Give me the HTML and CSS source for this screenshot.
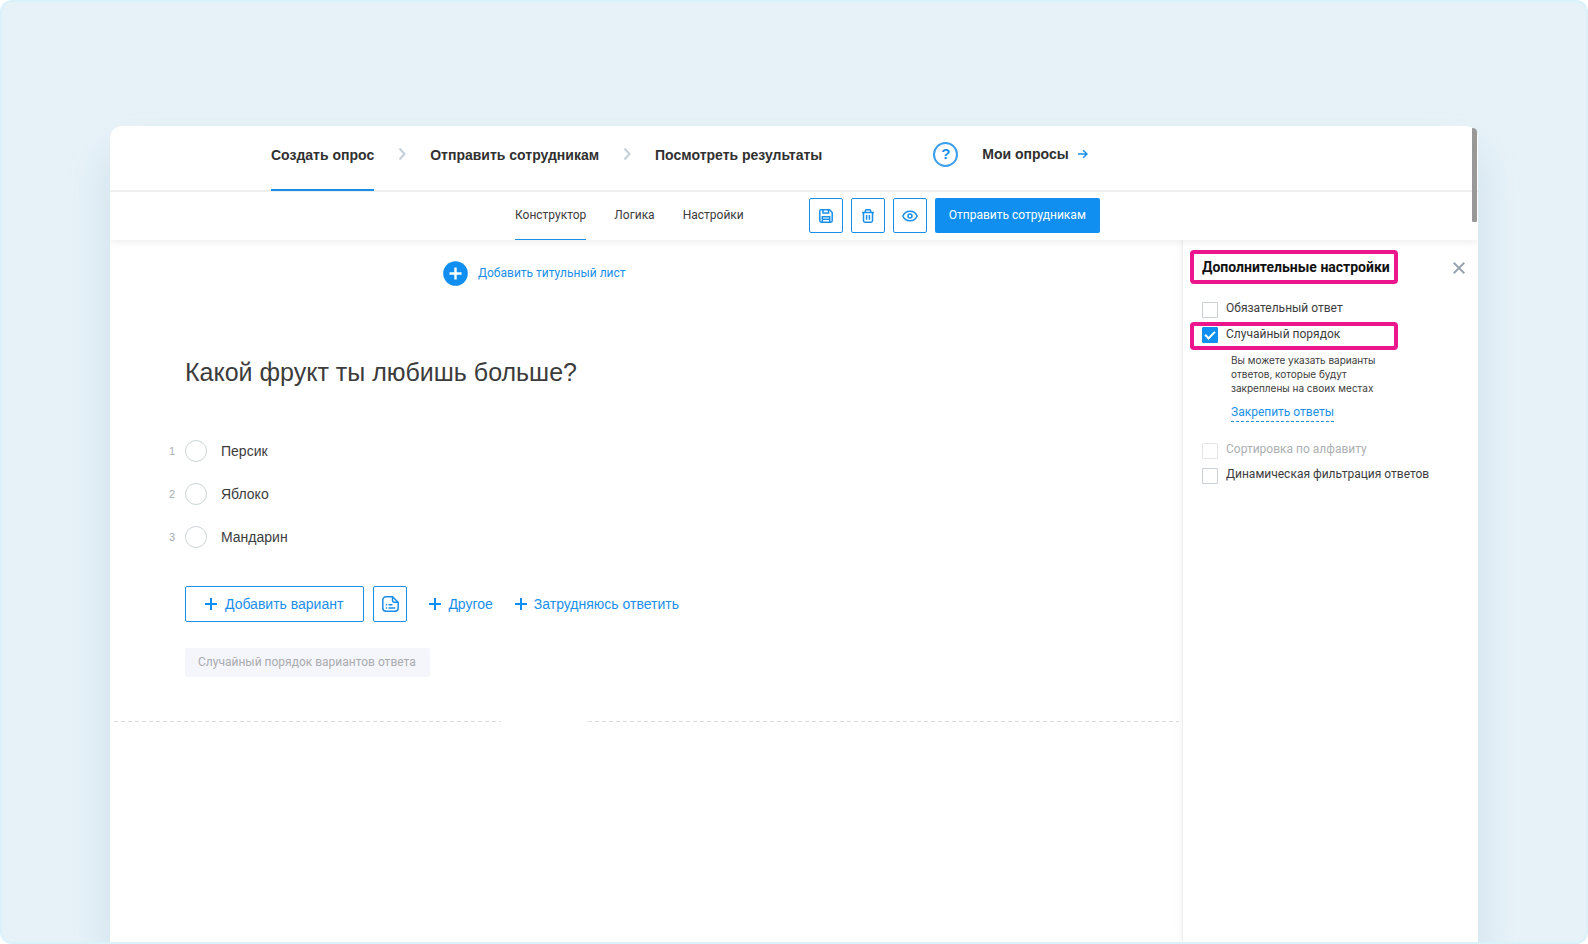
FILE: index.html
```html
<!DOCTYPE html>
<html lang="ru">
<head>
<meta charset="utf-8">
<meta name="viewport" content="width=device-width, initial-scale=1">
<title>Конструктор опроса</title>
<link rel="stylesheet" href="styles.css">
</head>
<body>
<div class="frame">
  <div class="card">
    <header class="header">
      <nav class="steps">
        <a class="step step-active" href="#">Создать опрос</a>
        <svg class="chevron" width="8" height="14" viewBox="0 0 8 14"><path d="M1.5 1.5 6.5 7l-5 5.5"/></svg>
        <a class="step" href="#">Отправить сотрудникам</a>
        <svg class="chevron" width="8" height="14" viewBox="0 0 8 14"><path d="M1.5 1.5 6.5 7l-5 5.5"/></svg>
        <a class="step" href="#">Посмотреть результаты</a>
      </nav>
      <button class="help" type="button" aria-label="Помощь">?</button>
      <a class="my-surveys" href="#">Мои опросы
        <svg class="line-icon" width="10" height="10" viewBox="0 0 10 10"><path d="M0 5h9M5.2 1.2 9 5 5.2 8.8"/></svg>
      </a>
    </header>

    <div class="toolbar">
      <nav class="tabs">
        <a class="tab tab-active" href="#">Конструктор</a>
        <a class="tab" href="#">Логика</a>
        <a class="tab" href="#">Настройки</a>
      </nav>
      <div class="actions">
        <button class="icon-button" type="button" aria-label="Сохранить">
          <svg class="line-icon" width="14" height="14" viewBox="0 0 14 14"><path d="M2.2.8h8.3l2.7 2.7v8.3a1.4 1.4 0 0 1-1.4 1.4H2.2A1.4 1.4 0 0 1 .8 11.8V2.2A1.4 1.4 0 0 1 2.2.8zM4 1v3h5.500V1M3.3 13V7.800h7.4V13M3.5 10.300h7"/></svg>
        </button>
        <button class="icon-button" type="button" aria-label="Удалить">
          <svg class="line-icon" width="14" height="14" viewBox="0 0 14 14"><path d="M1 3.500h12M4.3 3V2a1.300 1.300 0 0 1 1.300-1.300h2.800A1.300 1.300 0 0 1 9.700 2v1M2.500 3.500v8.300a1.400 1.400 0 0 0 1.400 1.400h6.200a1.400 1.400 0 0 0 1.400-1.400V3.500M5.600 6v4.700M8.400 6v4.700"/></svg>
        </button>
        <button class="icon-button" type="button" aria-label="Просмотр">
          <svg class="line-icon" width="16" height="12" viewBox="0 0 16 12"><path d="M.8 6C2.200 3 4.800 1.200 8 1.200S13.800 3 15.200 6C13.800 9 11.200 10.800 8 10.800S2.200 9 .8 6z"/><circle cx="8" cy="6" r="2"/></svg>
        </button>
        <button class="send" type="button">Отправить сотрудникам</button>
      </div>
    </div>

    <div class="workspace">
      <main class="editor">
        <button class="add-title" type="button">
          <svg width="25" height="25" viewBox="0 0 25 25"><circle cx="12.500" cy="12.500" r="12.300" fill="#108ff0"/><path d="M12.500 6.500v12M6.500 12.500h12" stroke="#fff" stroke-width="2.400"/></svg>
          <span class="add-title-text">Добавить титульный лист</span>
        </button>

        <section class="question">
          <h1 class="question-title">Какой фрукт ты любишь больше?</h1>
          <div class="answers">
            <div class="answer"><span class="number">1</span><input class="radio" type="radio" name="fruit" id="a1"><label for="a1">Персик</label></div>
            <div class="answer"><span class="number">2</span><input class="radio" type="radio" name="fruit" id="a2"><label for="a2">Яблоко</label></div>
            <div class="answer"><span class="number">3</span><input class="radio" type="radio" name="fruit" id="a3"><label for="a3">Мандарин</label></div>
          </div>
          <div class="add-row">
            <button class="add-option" type="button">
              <svg class="plus" width="12" height="12" viewBox="0 0 12 12"><path d="M6 0v12M0 6h12"/></svg>Добавить вариант
            </button>
            <button class="icon-button icon-button-tall" type="button" aria-label="Добавить списком">
              <svg class="line-icon" width="17" height="16" viewBox="0 0 17 16"><path d="M10.500.8H4A3.200 3.200 0 0 0 .8 4v8A3.200 3.200 0 0 0 4 15.200h9a3.200 3.200 0 0 0 3.200-3.200V6.200zM10.500 1v3.200a2 2 0 0 0 2 2H16M3.800 8.800h1.300M6.500 8.800h4M3.800 12h1.300M6.500 12h6.700"/></svg>
            </button>
            <button class="add-link" type="button"><svg class="plus" width="12" height="12" viewBox="0 0 12 12"><path d="M6 0v12M0 6h12"/></svg>Другое</button>
            <button class="add-link" type="button"><svg class="plus" width="12" height="12" viewBox="0 0 12 12"><path d="M6 0v12M0 6h12"/></svg>Затрудняюсь ответить</button>
          </div>
          <div class="badge">Случайный порядок вариантов ответа</div>
        </section>
        <div class="divider"><span class="dash dash-short"></span><span class="dash dash-long"></span></div>
      </main>

      <aside class="sidebar">
        <div class="sidebar-head">
          <h2 class="sidebar-title highlight">Дополнительные настройки</h2>
          <button class="close" type="button" aria-label="Закрыть">
            <svg width="12" height="12" viewBox="0 0 12 12"><path d="m.7.7 10.600 10.600M11.300.7.7 11.300"/></svg>
          </button>
        </div>
        <div class="setting"><input class="checkbox" type="checkbox" id="s1"><label for="s1">Обязательный ответ</label></div>
        <div class="setting setting-marked highlight"><input class="checkbox" type="checkbox" id="s2" checked><label for="s2">Случайный порядок</label></div>
        <p class="hint">Вы можете указать варианты<br>ответов, которые будут<br>закреплены на своих местах</p>
        <a class="pin-link" href="#">Закрепить ответы</a>
        <div class="setting setting-disabled"><input class="checkbox" type="checkbox" id="s3" disabled><label for="s3">Сортировка по алфавиту</label></div>
        <div class="setting"><input class="checkbox" type="checkbox" id="s4"><label for="s4">Динамическая фильтрация ответов</label></div>
      </aside>
    </div>
    <span class="scroll-thumb"></span>
  </div>
</div>
</body>
</html>
```
FILE: styles.css
```css
* { box-sizing: border-box; }

body {
  margin: 0;
  background: #fff;
  color: #3c3c3c;
  font: 14px/16px "Liberation Sans", Arial, sans-serif;
}

a { color: inherit; text-decoration: none; }

button {
  margin: 0;
  padding: 0;
  border: 0;
  background: none;
  color: #1a8fea;
  font: inherit;
  white-space: nowrap;
  cursor: pointer;
}

svg { display: block; flex: none; }

.frame {
  display: flex;
  min-height: 100vh;
  padding: 124px 108px 0;
  overflow: hidden;
  border: 2px solid #daf2fa;
  border-radius: 12px;
  background: #e7f2f8;
}

.card {
  position: relative;
  display: flex;
  flex: 1;
  flex-direction: column;
  min-width: 0;
  border-radius: 12px 12px 0 0;
  background: #fff;
  box-shadow: 0 28px 44px rgba(100, 150, 190, 0.2);
}

.line-icon {
  fill: none;
  stroke: #1a8fea;
  stroke-width: 1.5;
}

/* Header */
.header {
  display: flex;
  align-items: center;
  height: 66px;
  padding: 0 8px 8px 161px;
  border-bottom: 2px solid #efefef;
  color: #303030;
  font-weight: 700;
  white-space: nowrap;
}

.steps { display: flex; align-items: center; gap: 24px; }

.step {
  margin-bottom: -10px;
  padding: 20px 0 26px;
  border-bottom: 2px solid transparent;
}

.step-active { border-color: #1a8fea; }

.chevron {
  fill: none;
  stroke: #c3cfdb;
  stroke-width: 2;
}

.help {
  width: 25px;
  height: 25px;
  margin-left: 111px;
  border: 2px solid #3b9fee;
  border-radius: 50%;
  font-size: 15px;
  font-weight: 700;
  line-height: 20px;
}

.my-surveys {
  display: flex;
  align-items: center;
  gap: 9px;
  margin-left: 24px;
}

/* Toolbar */
.toolbar {
  position: relative;
  z-index: 1;
  display: flex;
  align-items: center;
  gap: 65px;
  height: 48px;
  padding-left: 405px;
  background: #fff;
  box-shadow: 0 2px 8px rgba(0, 0, 0, 0.07);
  clip-path: inset(0 0 -12px 0);
  font: 12px/16px Roboto, sans-serif;
  white-space: nowrap;
}

.tabs { display: flex; gap: 28px; }

.tab {
  padding: 15px 0 16px;
  border-bottom: 1px solid transparent;
}

.tab-active { border-color: #1a8fea; }

.actions { display: flex; gap: 8px; margin-bottom: 1px; }

.icon-button {
  display: grid;
  place-items: center;
  width: 34px;
  height: 35px;
  border: 1px solid #1a8fea;
  border-radius: 2px;
}

.icon-button-tall { height: 36px; }

.send {
  padding: 0 14px 1px;
  border-radius: 2px;
  background: #108ff0;
  color: #fff;
}

/* Editor */
.workspace { display: flex; flex: 1; }

.editor { flex: 1; min-width: 0; }

.add-title {
  display: flex;
  align-items: center;
  gap: 10px;
  margin: 21px 0 0 333px;
  font: 12px/16px Roboto, sans-serif;
}

.add-title-text { padding-bottom: 2px; }

.question { padding: 70px 24px 44px 75px; }

.question-title {
  margin: 0;
  font-size: 25px;
  font-weight: 400;
  line-height: 32px;
}

.answers {
  display: grid;
  gap: 21px;
  margin: 52px 0 38px -16px;
}

.answer { display: flex; align-items: center; }

.number {
  width: 16px;
  color: #a5adb5;
  font-size: 11px;
}

.radio {
  width: 22px;
  height: 22px;
  margin: 0 14px 0 0;
  appearance: none;
  border: 1px solid #ccd4d6;
  border-radius: 50%;
}

.radio:checked { border: 6px solid #108ff0; }

.add-row { display: flex; align-items: center; gap: 9px; }

.add-option {
  display: flex;
  align-items: center;
  gap: 8px;
  height: 36px;
  padding: 0 20px 0 19px;
  border: 1px solid #1a8fea;
  border-radius: 2px;
}

.add-link {
  display: flex;
  align-items: center;
  gap: 7px;
  margin-left: 13px;
}

.plus { stroke: #108ff0; stroke-width: 2; }

.badge {
  width: max-content;
  margin-top: 26px;
  padding: 6px 14px 7px 13px;
  border-radius: 2px;
  background: #f5f6fb;
  color: #a9abaf;
  font: 12px/16px Roboto, sans-serif;
}

.divider { display: flex; gap: 87px; padding: 0 4px; }

.dash {
  height: 1px;
  background: repeating-linear-gradient(90deg, #d8dcde 0 4px, transparent 4px 7px);
}

.dash-short { flex: 387; }
.dash-long { flex: 591; }

/* Settings panel */
.sidebar {
  width: 295px;
  padding: 10px 13px 0 7px;
  background: #fff;
  box-shadow: -1px 0 2px rgba(0, 0, 0, 0.07), -4px 0 8px rgba(0, 0, 0, 0.02);
  font: 12px/16px Roboto, sans-serif;
}

.highlight { border: 4px solid #ec168c; border-radius: 4px; }

.sidebar-head {
  display: flex;
  align-items: center;
  justify-content: space-between;
  margin-bottom: 16px;
}

.sidebar-title {
  width: 208px;
  margin: 0;
  padding: 5px 8px;
  color: #111;
  font-size: 14px;
  line-height: 16px;
  white-space: nowrap;
}

.close { padding-top: 2px; }

.close svg { stroke: #9aa4b0; stroke-width: 2; }

.setting {
  display: flex;
  align-items: flex-start;
  gap: 8px;
  margin-bottom: 4px;
  padding-left: 12px;
}

.setting-marked {
  width: 208px;
  height: 28px;
  margin-bottom: 3px;
  padding-left: 8px;
}

.setting-disabled { margin-bottom: 7px; color: #adb0b3; }

.checkbox {
  display: grid;
  place-items: center;
  width: 16px;
  height: 16px;
  margin: 2px 0 0;
  appearance: none;
  border: 1px solid #c8d0d6;
  border-radius: 1px;
}

.setting-marked .checkbox { margin-top: 1px; }

.checkbox:disabled { border-color: #e4e6e8; }

.checkbox:checked { border-color: #108ff0; background: #108ff0; }

.checkbox:checked::before {
  width: 8px;
  height: 4px;
  margin-bottom: 3px;
  border: solid #fff;
  border-width: 0 0 2px 2px;
  content: "";
  transform: rotate(-45deg);
}

.hint {
  margin: 0 0 9px 41px;
  font: 10px/14px Inter, sans-serif;
}

.pin-link {
  display: block;
  width: max-content;
  margin: 0 0 19px 41px;
  padding-bottom: 1px;
  border-bottom: 1px dashed #1a8fea;
  color: #1a8fea;
}

.scroll-thumb {
  position: absolute;
  z-index: 2;
  top: 2px;
  right: 1px;
  width: 5px;
  height: 94px;
  border-radius: 2px 10px 3px 3px;
  background: #989898;
}
```
